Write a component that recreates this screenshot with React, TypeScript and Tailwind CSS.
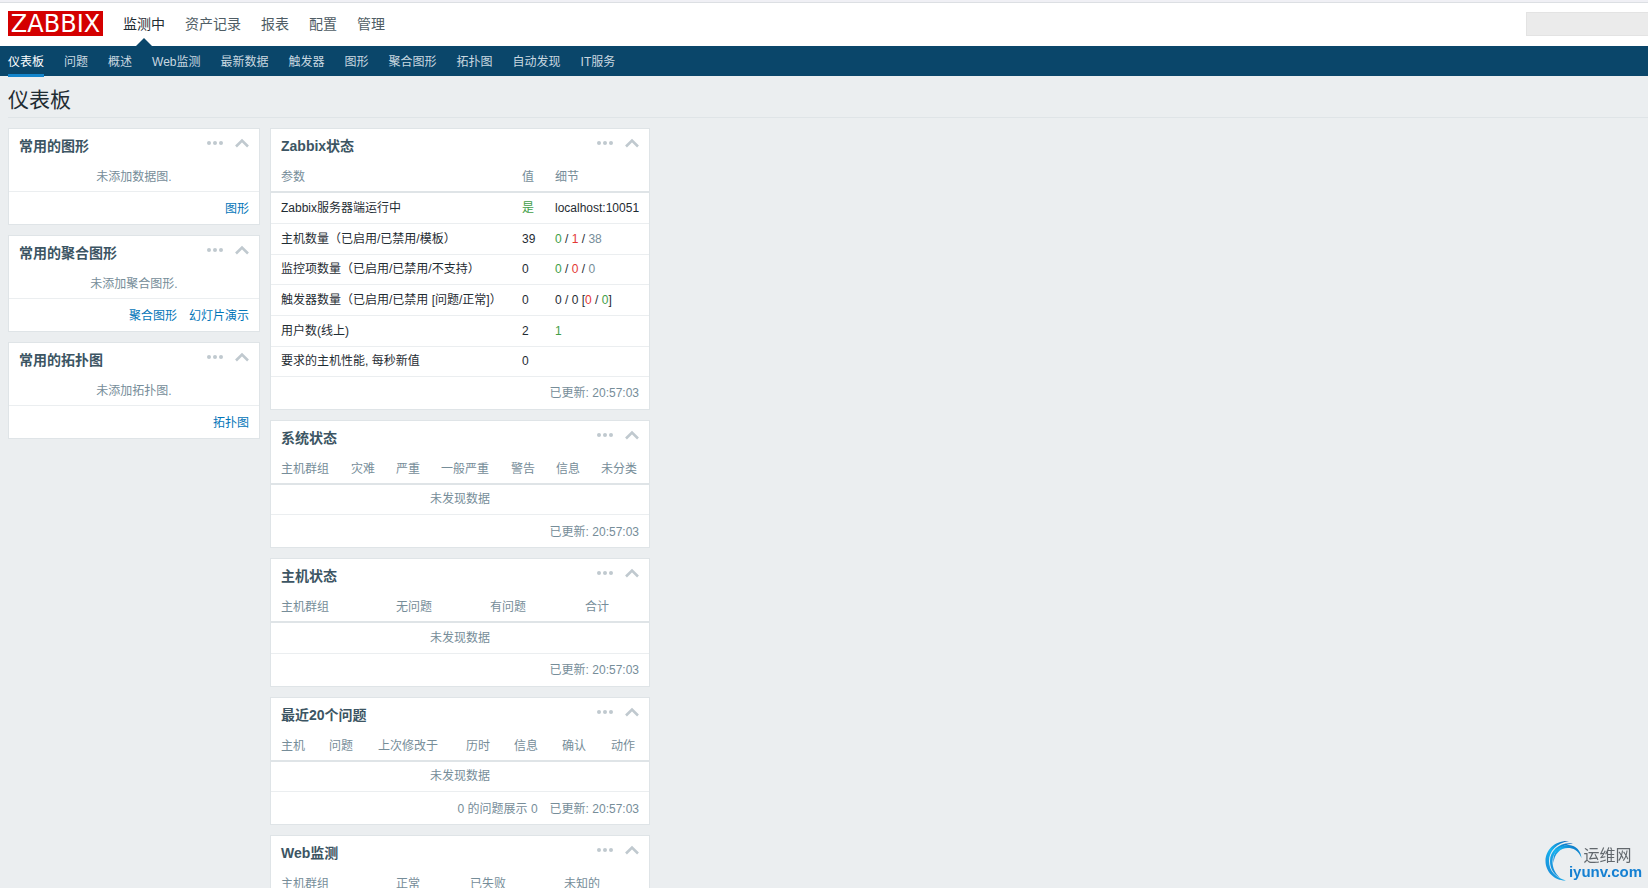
import { Fragment, ReactNode } from "react";
import clsx from "clsx";

const mainMenu = ["监测中", "资产记录", "报表", "配置", "管理"];

const subMenu = [
  "仪表板",
  "问题",
  "概述",
  "Web监测",
  "最新数据",
  "触发器",
  "图形",
  "聚合图形",
  "拓扑图",
  "自动发现",
  "IT服务",
];

const favourites = [
  { title: "常用的图形", empty: "未添加数据图.", links: ["图形"] },
  {
    title: "常用的聚合图形",
    empty: "未添加聚合图形.",
    links: ["聚合图形", "幻灯片演示"],
  },
  { title: "常用的拓扑图", empty: "未添加拓扑图.", links: ["拓扑图"] },
];

type Part = { text: string; tone?: "green" | "red" | "grey" };

const tones = {
  green: "text-[#429e47]",
  red: "text-[#e33734]",
  grey: "text-[#768d99]",
};

const statusRows: { name: string; value: Part; details: Part[] }[] = [
  {
    name: "Zabbix服务器端运行中",
    value: { text: "是", tone: "green" },
    details: [{ text: "localhost:10051" }],
  },
  {
    name: "主机数量（已启用/已禁用/模板）",
    value: { text: "39" },
    details: [
      { text: "0", tone: "green" },
      { text: " / " },
      { text: "1", tone: "red" },
      { text: " / " },
      { text: "38", tone: "grey" },
    ],
  },
  {
    name: "监控项数量（已启用/已禁用/不支持）",
    value: { text: "0" },
    details: [
      { text: "0", tone: "green" },
      { text: " / " },
      { text: "0", tone: "red" },
      { text: " / " },
      { text: "0", tone: "grey" },
    ],
  },
  {
    name: "触发器数量（已启用/已禁用 [问题/正常]）",
    value: { text: "0" },
    details: [
      { text: "0 / 0 [" },
      { text: "0", tone: "red" },
      { text: " / " },
      { text: "0", tone: "green" },
      { text: "]" },
    ],
  },
  {
    name: "用户数(线上)",
    value: { text: "2" },
    details: [{ text: "1", tone: "green" }],
  },
  { name: "要求的主机性能, 每秒新值", value: { text: "0" }, details: [] },
];

type Column = { label: string; width: string };

const emptyWidgets: { title: string; columns: Column[]; note?: string }[] = [
  {
    title: "系统状态",
    columns: [
      { label: "主机群组", width: "w-[70px]" },
      { label: "灾难", width: "w-[45px]" },
      { label: "严重", width: "w-[45px]" },
      { label: "一般严重", width: "w-[70px]" },
      { label: "警告", width: "w-[45px]" },
      { label: "信息", width: "w-[45px]" },
      { label: "未分类", width: "w-[58px]" },
    ],
  },
  {
    title: "主机状态",
    columns: [
      { label: "主机群组", width: "w-[115px]" },
      { label: "无问题", width: "w-[94px]" },
      { label: "有问题", width: "w-[95px]" },
      { label: "合计", width: "w-[74px]" },
    ],
  },
  {
    title: "最近20个问题",
    note: "0 的问题展示 0",
    columns: [
      { label: "主机", width: "w-[48px]" },
      { label: "问题", width: "w-[49px]" },
      { label: "上次修改于", width: "w-[88px]" },
      { label: "历时", width: "w-[48px]" },
      { label: "信息", width: "w-[48px]" },
      { label: "确认", width: "w-[49px]" },
      { label: "动作", width: "w-[48px]" },
    ],
  },
  {
    title: "Web监测",
    columns: [
      { label: "主机群组", width: "w-[115px]" },
      { label: "正常", width: "w-[74px]" },
      { label: "已失败", width: "w-[94px]" },
      { label: "未知的", width: "w-[95px]" },
    ],
  },
];

const PartText = ({ part }: { part: Part }) =>
  part.tone ? (
    <span className={tones[part.tone]}>{part.text}</span>
  ) : (
    <Fragment>{part.text}</Fragment>
  );

const Widget = ({
  title,
  children,
  footer,
}: {
  title: string;
  children: ReactNode;
  footer: ReactNode;
}) => (
  <section className="border border-[#dfe4e7] bg-white">
    <div className="flex h-8 items-start justify-between px-[10px]">
      <h4 className="pt-[7px] text-sm leading-5 font-bold text-[#3c5563]">
        {title}
      </h4>
      <div className="flex gap-[11px] pt-2 text-[#c0c9cf]">
        <button type="button" aria-label="刷新间隔" className="h-3">
          <svg width="18" height="12" viewBox="0 0 18 12" fill="currentColor">
            <circle cx="3" cy="6" r="2" />
            <circle cx="9" cy="6" r="2" />
            <circle cx="15" cy="6" r="2" />
          </svg>
        </button>
        <button type="button" aria-label="折叠" className="h-3">
          <svg
            width="14"
            height="12"
            viewBox="0 0 14 12"
            fill="none"
            stroke="currentColor"
            strokeWidth="2.6"
          >
            <path d="M1 9.5 L7 3.5 L13 9.5" />
          </svg>
        </button>
      </div>
    </div>
    {children}
    <div className="flex h-8 items-center justify-end gap-3 px-[10px] pt-px">
      {footer}
    </div>
  </section>
);

const TableHead = ({ columns }: { columns: Column[] }) => (
  <thead>
    <tr className="h-[31px] border-b-2 border-[#dfe4e7] text-left text-[#768d99]">
      {columns.map((column) => (
        <th
          key={column.label}
          className={clsx("pt-0.5 pl-[10px] font-normal", column.width)}
        >
          {column.label}
        </th>
      ))}
    </tr>
  </thead>
);

const updated = <span className="text-[#768d99]">已更新: 20:57:03</span>;

const App = () => {
  return (
    <div className="flex h-screen flex-col overflow-hidden bg-[#ebeef0] font-['Liberation_Sans','Noto_Sans_CJK_SC',sans-serif] text-xs text-[#1f2c33]">
      <header className="border-t-2 border-[#f0f0f5]">
        <div className="flex h-11 items-center justify-between border-t border-[#dcdfe3] bg-white pl-2">
          <div className="flex items-center gap-5">
            <a
              href="#"
              className="mb-0.5 flex h-[25px] w-[95px] items-center justify-center bg-[#d40000] font-['DejaVu_Sans'] text-2xl leading-6 text-white"
            >
              ZABBIX
            </a>
            <nav className="flex gap-5 text-sm">
              {mainMenu.map((item, i) => (
                <a
                  key={item}
                  href="#"
                  className={clsx(
                    "relative flex h-[43px] items-center pb-0.5",
                    i === 0 ? "text-[#1f2c33]" : "text-[#4f5d65]"
                  )}
                >
                  {item}
                  {i === 0 && (
                    <svg
                      className="absolute bottom-0 left-1/2 -translate-x-1/2"
                      width="16"
                      height="8"
                      viewBox="0 0 16 8"
                    >
                      <path d="M0 8 L8 0 L16 8 Z" fill="#0a466a" />
                    </svg>
                  )}
                </a>
              ))}
            </nav>
          </div>
          <input
            type="search"
            aria-label="搜索"
            className="mb-0.5 h-6 w-[122px] border border-r-0 border-[#e3e3e3] bg-[#ebebeb] px-2 outline-none"
          />
        </div>
        <nav className="flex h-[30px] gap-5 bg-[#0a466a] px-2">
          {subMenu.map((item, i) => (
            <a
              key={item}
              href="#"
              className={clsx(
                "flex items-center whitespace-nowrap",
                i === 0
                  ? "-mb-px border-b-3 border-[#1385cc] pt-1 text-white"
                  : "pt-0.5 text-[#c9d8e0]"
              )}
            >
              {item}
            </a>
          ))}
        </nav>
      </header>

      <main className="pl-2">
        <h1 className="flex h-[42px] items-center border-b border-[#dfe4e7] pt-1.5 text-[21px]">
          仪表板
        </h1>
        <div className="mt-[10px] flex items-start gap-[10px]">
          <div className="flex w-63 shrink-0 flex-col gap-[10px]">
            {favourites.map((widget) => (
              <Widget
                key={widget.title}
                title={widget.title}
                footer={widget.links.map((link) => (
                  <a key={link} href="#" className="text-[#0275b8]">
                    {link}
                  </a>
                ))}
              >
                <p className="flex h-[31px] items-center justify-center border-b border-[#ebeef0] pt-0.5 text-[#768d99]">
                  {widget.empty}
                </p>
              </Widget>
            ))}
          </div>

          <div className="flex w-95 shrink-0 flex-col gap-[10px]">
            <Widget title="Zabbix状态" footer={updated}>
              <table className="w-full table-fixed border-collapse">
                <TableHead
                  columns={[
                    { label: "参数", width: "w-[241px]" },
                    { label: "值", width: "w-[33px]" },
                    { label: "细节", width: "w-[104px]" },
                  ]}
                />
                <tbody>
                  {statusRows.map((row) => (
                    <tr
                      key={row.name}
                      className="h-[31px] border-b border-[#ebeef0] nth-[3n]:h-[30px]"
                    >
                      <td className="pl-[10px] whitespace-nowrap">
                        {row.name}
                      </td>
                      <td className="pl-[10px]">
                        <PartText part={row.value} />
                      </td>
                      <td className="pl-[10px] whitespace-nowrap">
                        {row.details.map((part, i) => (
                          <PartText key={i} part={part} />
                        ))}
                      </td>
                    </tr>
                  ))}
                </tbody>
              </table>
            </Widget>

            {emptyWidgets.map((widget) => (
              <Widget
                key={widget.title}
                title={widget.title}
                footer={
                  <>
                    {widget.note && (
                      <span className="text-[#768d99]">{widget.note}</span>
                    )}
                    {updated}
                  </>
                }
              >
                <table className="w-full table-fixed border-collapse">
                  <TableHead columns={widget.columns} />
                  <tbody>
                    <tr className="h-[31px] border-b border-[#ebeef0] text-center text-[#768d99]">
                      <td colSpan={widget.columns.length}>未发现数据</td>
                    </tr>
                  </tbody>
                </table>
              </Widget>
            ))}
          </div>
        </div>
      </main>

      <a
        href="#"
        aria-label="运维网 iyunv.com"
        className="fixed right-1.5 bottom-1.5 flex items-end"
      >
        <svg width="40" height="42" viewBox="0 0 40 42" className="-mr-4">
          <defs>
            <linearGradient id="swirl" x1="0" y1="1" x2="1" y2="0">
              <stop offset="0" stopColor="#1b7fd0" />
              <stop offset="0.5" stopColor="#16b4f0" />
              <stop offset="1" stopColor="#0c5fb4" />
            </linearGradient>
          </defs>
          <g fill="url(#swirl)">
            <path d="M24 1 C10 0 0.500 10 0.500 21 C0.500 32 10 41 21 40.500 C11 38 4 31 4 21 C4 11 12 3 24 1 Z" />
            <path d="M28 3.500 C15 2 5 10 5 21 C5 29 9 34.500 15 38 C10 33 7.500 28 7.500 21.500 C7.500 12 16 5 28 3.500 Z" />
            <path d="M8.500 23 C7 12 15 4.500 24 5 C31 5.500 36 11 36.500 18 C33 10 28 8 23 8 C15 8 9.500 14 8.500 23 Z" />
          </g>
        </svg>
        <span className="relative flex flex-col">
          <span className="self-center pl-1 font-['Noto_Sans_CJK_SC'] text-base leading-4 text-[#62686d]">
            运维网
          </span>
          <span className="text-[15px] leading-5 font-bold text-[#1580d2]">
            iyunv.com
          </span>
        </span>
      </a>
    </div>
  );
};

export default App;
